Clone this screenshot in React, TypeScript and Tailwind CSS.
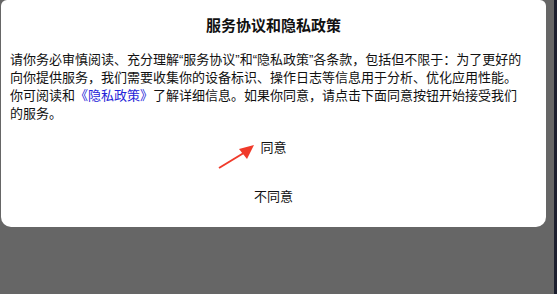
export default function App() {
  return (
    <div
      className="flex h-[294px] w-[557px] overflow-hidden bg-[#666666]"
      style={{ fontFamily: '"Liberation Sans", "Noto Sans CJK SC", sans-serif' }}
    >
      <div className="flex flex-1 flex-col pl-px pr-[8px]">
        <div className="flex h-[227px] flex-col rounded-t-[6px] rounded-b-[10px] bg-white">
          <h1 className="h-[51px] pt-[15px] text-center text-[15px] font-bold leading-[22px] text-[#111]">
            服务协议和隐私政策
          </h1>
          <div className="whitespace-nowrap px-[9px] text-[13px] leading-[18px] text-[#111]">
            <div>请你务必审慎阅读、充分理解“服务协议”和“隐私政策”各条款，包括但不限于：为了更好的</div>
            <div>向你提供服务，我们需要收集你的设备标识、操作日志等信息用于分析、优化应用性能。</div>
            <div>
              你可阅读和<span className="text-[#2424d8]">《隐私政策》</span>了解详细信息。如果你同意，请点击下面同意按钮开始接受我们
            </div>
            <div>的服务。</div>
          </div>
          <div className="relative mt-[13px] flex h-[24px] items-center justify-center text-[13px] text-[#111]">
            同意
            <svg className="absolute left-[216px] top-[7px]" width="40" height="28" viewBox="0 0 40 28">
              <line x1="2" y1="25" x2="30" y2="8" stroke="#f03a2a" strokeWidth="2" />
              <polygon points="37,2 22,6 30,16" fill="#f03a2a" />
            </svg>
          </div>
          <div className="mt-[25px] flex h-[24px] items-center justify-center text-[13px] text-[#111]">
            不同意
          </div>
        </div>
      </div>
      <div className="w-[3px] bg-[#1c1f2e]" />
    </div>
  );
}
